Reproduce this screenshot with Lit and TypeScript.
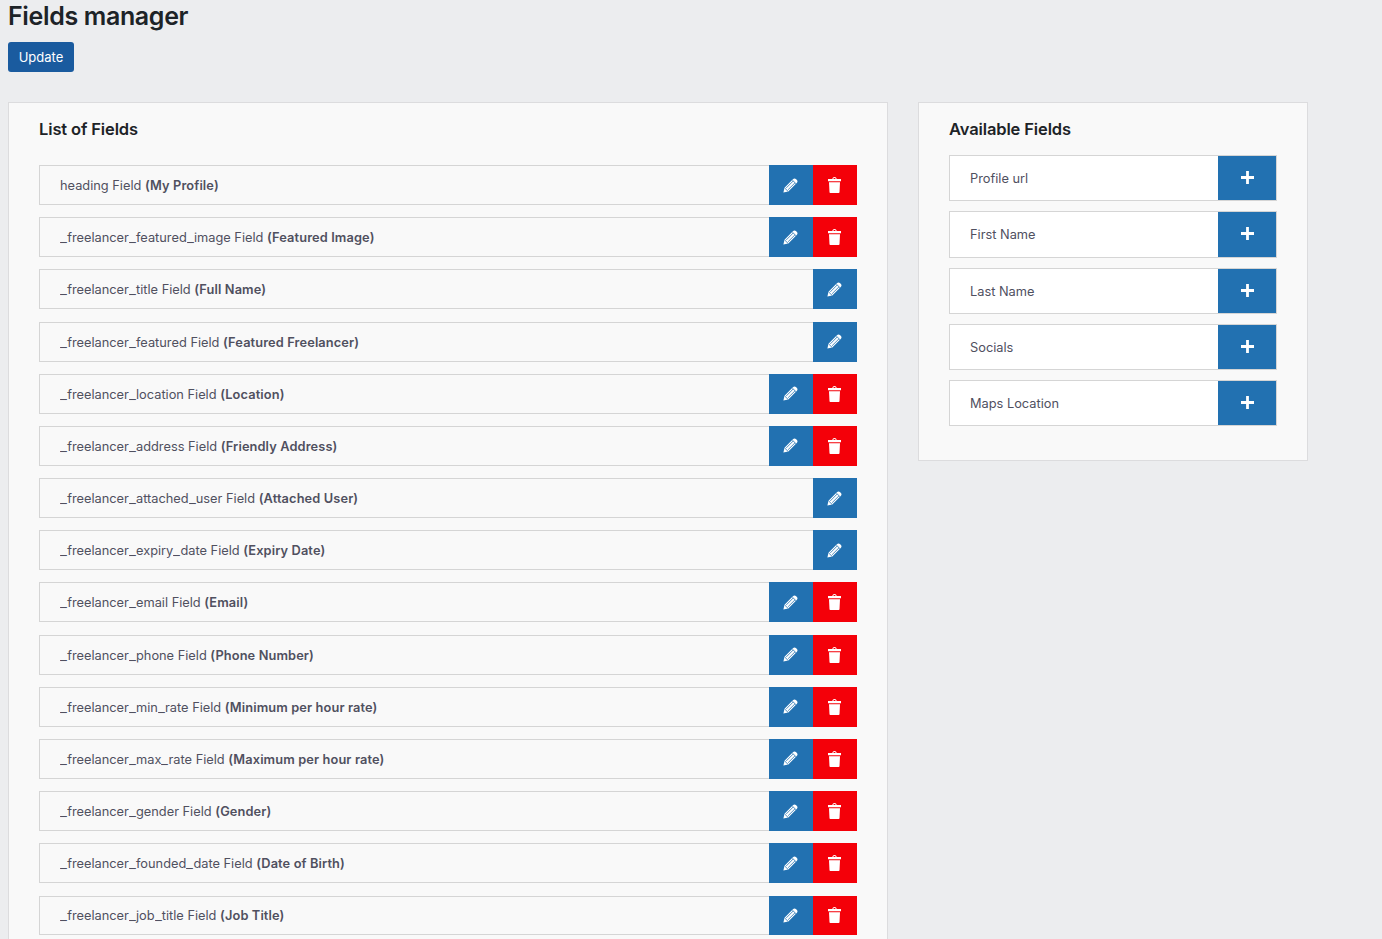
import { LitElement, html, css } from "lit";
import { customElement } from "lit/decorators.js";

const fields: [string, string, boolean][] = [
  ["heading", "My Profile", true],
  ["_freelancer_featured_image", "Featured Image", true],
  ["_freelancer_title", "Full Name", false],
  ["_freelancer_featured", "Featured Freelancer", false],
  ["_freelancer_location", "Location", true],
  ["_freelancer_address", "Friendly Address", true],
  ["_freelancer_attached_user", "Attached User", false],
  ["_freelancer_expiry_date", "Expiry Date", false],
  ["_freelancer_email", "Email", true],
  ["_freelancer_phone", "Phone Number", true],
  ["_freelancer_min_rate", "Minimum per hour rate", true],
  ["_freelancer_max_rate", "Maximum per hour rate", true],
  ["_freelancer_gender", "Gender", true],
  ["_freelancer_founded_date", "Date of Birth", true],
  ["_freelancer_job_title", "Job Title", true],
];
const avail = ["Profile url", "First Name", "Last Name", "Socials", "Maps Location"];

const pencil = html`<svg width="15" height="15" viewBox="0 0 15 15" aria-hidden="true">
  <path fill="#fff" d="M.4 14.6 1.500 9.700 9.900 1.300C10.900.3 12 .3 12.900 1.100l1 1C14.800 3 14.700 4.100 13.700 5.100L5.300 13.500z"/>
  <path fill="none" stroke="#2271b1" stroke-width=".8" d="M3.300 9.900 10.200 3M5.100 11.700 12 4.800M9.300 2 13 5.700M1.700 10 5 13.300"/>
</svg>`;
const trash = html`<svg width="13" height="16" viewBox="0 0 13 16" aria-hidden="true">
  <path fill="#fff" fill-rule="evenodd" d="M0 2.100H4.300C4.500 .7 5.300 0 6.500 0S8.500 .7 8.700 2.100H13V4.200H0zM5.300 2.100H7.700C7.500 1.300 7.100 1 6.500 1S5.500 1.300 5.300 2.100z"/>
  <path fill="#fff" d="M1 5.300H12L11.500 15.200C11.500 15.700 11.100 16 10.700 16H2.300C1.900 16 1.500 15.700 1.500 15.200z"/>
</svg>`;
const plus = html`<svg width="13" height="13" viewBox="0 0 13 13" aria-hidden="true">
  <path fill="#fff" d="M5.100 0h2.800v5.100H13v2.800H7.900V13H5.100V7.900H0V5.100h5.100z"/>
</svg>`;

const withUnderscores = (s: string) =>
  s.split(/(_)/).map((p) => (p === "_" ? html`<span class="u">_</span>` : p));

@customElement("app-root")
export class AppRoot extends LitElement {
  static styles = css`
    :host {
      display: block;
      height: 939px;
      overflow: hidden;
      background: #ecedef;
      font-family: Inter, "Liberation Sans", sans-serif;
      color: #50505f;
      font-size: 12.8px;
    }
    .page {
      padding: 0 8px;
    }
    h1 {
      margin: 0;
      font-size: 25px;
      line-height: 32px;
      font-weight: 600;
      color: #1d2327;
      letter-spacing: -0.35px;
    }
    .update {
      display: block;
      margin: 10px 0 30px;
      width: 66px;
      height: 30px;
      padding: 0;
      border: 0;
      border-radius: 3px;
      background: #1a5b9f;
      color: #fff;
      font: 400 13px Inter, "Liberation Sans", sans-serif;
    }
    .cols {
      display: flex;
      align-items: flex-start;
      gap: 30px;
    }
    .card {
      box-sizing: border-box;
      background: #f9f9f9;
      border: 1px solid #dcdcde;
      padding: 0 30px;
    }
    .list {
      width: 880px;
      padding-bottom: 30px;
    }
    .side {
      width: 390px;
      padding-bottom: 33.55px;
    }
    h2 {
      margin: 0;
      padding-top: 16px;
      font-size: 16.5px;
      line-height: 21px;
      font-weight: 600;
      color: #1d2327;
      letter-spacing: -0.13px;
    }
    .rows {
      margin-top: 25.1px;
      display: flex;
      flex-direction: column;
      gap: 12.29px;
    }
    .row {
      box-sizing: border-box;
      height: 39.9px;
      display: flex;
      align-items: stretch;
      background: #f9f9f9;
      border: 1px solid #d5d5d5;
      border-right: 0;
    }
    .label {
      flex: 1;
      padding-left: 20px;
      display: flex;
      align-items: center;
      white-space: pre;
    }
    .row .label {
      padding-top: 1px;
    }
    .arow .label {
      padding-top: 0.5px;
    }
    .u {
      display: inline-block;
      letter-spacing: 1.3px;
      transform: scaleX(1.18);
      transform-origin: left;
    }
    b {
      font-weight: 600;
      letter-spacing: 0.12px;
    }
    .btn {
      box-sizing: border-box;
      width: 44px;
      margin: -1px 0;
      padding-right: 1px;
      display: flex;
      align-items: center;
      justify-content: center;
    }
    .edit {
      background: #2271b1;
    }
    .del {
      background: #f40009;
    }
    .rows2 {
      margin-top: 15.2px;
      display: flex;
      flex-direction: column;
      gap: 10px;
    }
    .arow {
      box-sizing: border-box;
      height: 46.25px;
      display: flex;
      background: #fff;
      border: 1px solid #d5d5d5;
    }
    .add {
      width: 58px;
      background: #2271b1;
      display: flex;
      align-items: center;
      justify-content: center;
      padding-bottom: 1.4px;
    }
  `;

  render() {
    return html`<div class="page">
      <h1>Fields manager</h1>
      <button class="update">Update</button>
      <div class="cols">
        <section class="card list">
          <h2>List of Fields</h2>
          <div class="rows">
            ${fields.map(
              ([k, n, d]) => html`<div class="row">
                <div class="label"><span>${withUnderscores(k)} Field <b>(${n})</b></span></div>
                <div class="btn edit">${pencil}</div>
                ${d ? html`<div class="btn del">${trash}</div>` : ""}
              </div>`
            )}
          </div>
        </section>
        <section class="card side">
          <h2>Available Fields</h2>
          <div class="rows2">
            ${avail.map(
              (a) => html`<div class="arow">
                <div class="label">${a}</div>
                <div class="add">${plus}</div>
              </div>`
            )}
          </div>
        </section>
      </div>
    </div>`;
  }
}
